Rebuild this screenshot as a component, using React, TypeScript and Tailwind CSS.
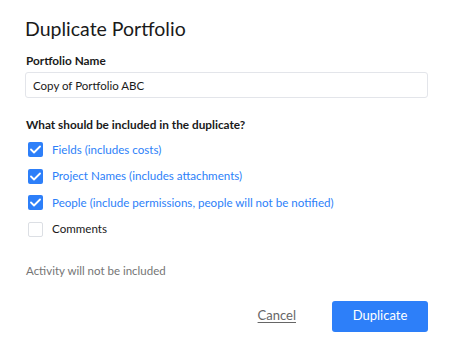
import { useState } from "react";

const options = [
  { id: "fields", label: "Fields (includes costs)", checked: true },
  { id: "names", label: "Project Names (includes attachments)", checked: true },
  {
    id: "people",
    label: "People (include permissions, people will not be notified)",
    checked: true,
  },
  { id: "comments", label: "Comments", checked: false },
];

export default function App() {
  const [name, setName] = useState("Copy of Portfolio ABC");
  const [checked, setChecked] = useState<Record<string, boolean>>(
    Object.fromEntries(options.map((o) => [o.id, o.checked]))
  );

  return (
    <div
      className="w-[450px] h-[348px] bg-white pl-[25px] pt-[16px] text-[#1a1a1a]"
      style={{ fontFamily: "Lato, 'Noto Sans', sans-serif" }}
    >
      <div className="w-[403px]">
        <h1 className="text-[19.5px] leading-[26px] font-normal">Duplicate Portfolio</h1>

        <label className="block mt-[12px] text-[11.8px] leading-[14px] font-bold pl-px">
          Portfolio Name
        </label>
        <input
          value={name}
          onChange={(e) => setName(e.target.value)}
          className="mt-[4px] w-[403px] h-[26px] border border-[#e3e5ea] rounded-[3px] px-[7px] text-[11.5px] outline-none"
        />

        <p className="mt-[20px] text-[11.8px] leading-[14px] font-bold pl-px">
          What should be included in the duplicate?
        </p>

        <div className="mt-[10px] flex flex-col gap-[11.5px] pl-[3px]">
          {options.map((o) => {
            const on = checked[o.id];
            return (
              <label
                key={o.id}
                className="flex items-center gap-[9px] h-[15px] cursor-pointer"
                onClick={() => setChecked({ ...checked, [o.id]: !on })}
              >
                <span
                  className={
                    on
                      ? "w-[15px] h-[15px] rounded-[2px] bg-[#2d7ff9] flex items-center justify-center"
                      : "w-[15px] h-[15px] rounded-[2px] border border-[#dcdfe4] bg-white"
                  }
                >
                  {on && (
                    <svg width="11" height="9" viewBox="0 0 11 9" fill="none">
                      <path
                        d="M1 4.5L4 7.5L10 1.5"
                        stroke="white"
                        strokeWidth="1.8"
                        strokeLinecap="round"
                        strokeLinejoin="round"
                      />
                    </svg>
                  )}
                </span>
                <span
                  className={
                    on
                      ? "text-[11.6px] text-[#2d7ff9]"
                      : "text-[11.6px] text-[#1a1a1a]"
                  }
                >
                  {o.label}
                </span>
              </label>
            );
          })}
        </div>

        <p className="mt-[27px] text-[11.5px] leading-[14px] text-[#757575] pl-px">
          Activity will not be included
        </p>

        <div className="mt-[23px] flex items-center justify-end gap-[36px]">
          <button className="text-[13px] text-[#666] underline underline-offset-2">
            Cancel
          </button>
          <button className="w-[96px] h-[31px] rounded-[3px] bg-[#2d7ff9] text-white text-[13px]">
            Duplicate
          </button>
        </div>
      </div>
    </div>
  );
}
